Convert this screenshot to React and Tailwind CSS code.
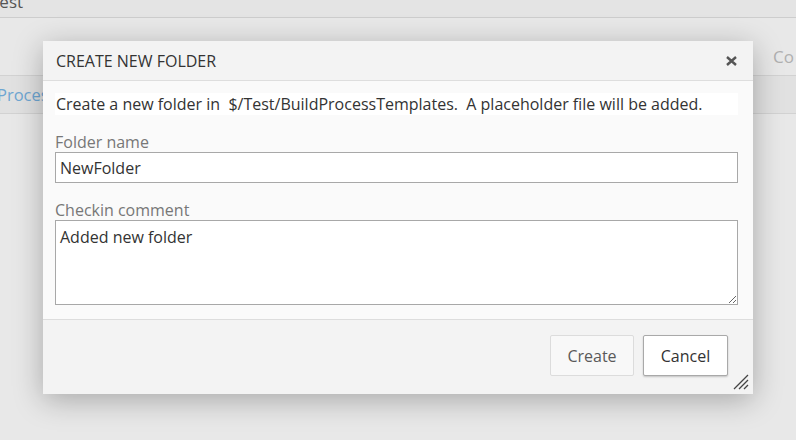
import { useState } from "react";

function CloseIcon() {
  return (
    <svg width="11" height="10" viewBox="0 0 11 10" className="block">
      <path d="M1 1 L10 9 M10 1 L1 9" stroke="#555" strokeWidth="2.4" />
    </svg>
  );
}

function Grip() {
  return (
    <svg width="16" height="16" viewBox="0 0 16 16" className="block">
      <path d="M1 15 L15 1 M6 15 L15 6 M11 15 L15 11" stroke="#444" strokeWidth="1.3" />
    </svg>
  );
}

export default function App() {
  const [name, setName] = useState("NewFolder");
  const [comment, setComment] = useState("Added new folder");

  return (
    <div
      className="relative w-[796px] h-[440px] overflow-hidden bg-[#e8e8e8] text-[#333]"
      style={{ fontFamily: '"Open Sans", "Noto Sans", sans-serif' }}
    >
      {/* dimmed page behind the dialog */}
      <div className="h-[18px] bg-[#e4e4e4] border-b border-[#cdcdcd] flex items-end overflow-hidden">
        <span className="text-[17px] leading-[18px] -ml-[10px] -translate-y-[6px] text-[#555]">Test</span>
      </div>
      <div className="h-[57px] flex justify-end items-start">
        <span className="text-[17px] text-[#b0b0b0] mt-[26px] w-[23px]">Co</span>
      </div>
      <div className="h-[39px] bg-[#e1e1e1] border-y border-[#d2d2d2] flex items-center">
        <span className="text-[16.5px] text-[#6ea6d2] -ml-[3px] mt-[2px]">Process</span>
      </div>

      {/* dialog */}
      <div className="absolute left-[43px] top-[41px] w-[710px] h-[353px] bg-[#f3f3f3] flex flex-col shadow-[0_6px_28px_rgba(0,0,0,0.28)]">
        <div className="h-[40px] flex items-center justify-between pl-[13px] pr-[16px] border-b border-[#dedede]">
          <span className="text-[16px] text-[#333]">CREATE NEW FOLDER</span>
          <CloseIcon />
        </div>
        <div className="h-[239px] bg-[#fafafa] border-b border-[#dddddd] pl-[12px] pr-[15px] pt-[12px]">
          <div className="bg-white h-[22px] flex items-center text-[16px] text-[#333] pl-[1px] whitespace-nowrap">
            Create a new folder in&nbsp; $/Test/BuildProcessTemplates.&nbsp; A placeholder file will be added.
          </div>
          <div className="mt-[17px] text-[16px] leading-[20px] text-[#777]">Folder name</div>
          <input
            value={name}
            onChange={(e) => setName(e.target.value)}
            className="block w-full h-[31px] border border-[#a8a8a8] bg-white px-[4px] text-[16px] text-[#333] outline-none"
          />
          <div className="mt-[17px] text-[16px] leading-[20px] text-[#777]">Checkin comment</div>
          <textarea
            value={comment}
            onChange={(e) => setComment(e.target.value)}
            className="block w-full h-[85px] border border-[#a8a8a8] bg-white px-[4px] pt-[6px] text-[16px] leading-[20px] text-[#333] outline-none"
          />
        </div>
        <div className="flex-1 flex justify-end items-start pt-[15px] pr-[25px] gap-[9px] relative">
          <button className="w-[84px] h-[41px] bg-[#f8f8f8] border border-[#dcdcdc] rounded-[2px] text-[16px] text-[#5a5a5a]">
            Create
          </button>
          <button className="w-[85px] h-[41px] bg-white border border-[#a9a9a9] rounded-[2px] text-[16px] text-[#333] shadow-[0_1px_2px_rgba(0,0,0,0.2)]">
            Cancel
          </button>
          <div className="absolute right-[4px] bottom-[4px]">
            <Grip />
          </div>
        </div>
      </div>
    </div>
  );
}
